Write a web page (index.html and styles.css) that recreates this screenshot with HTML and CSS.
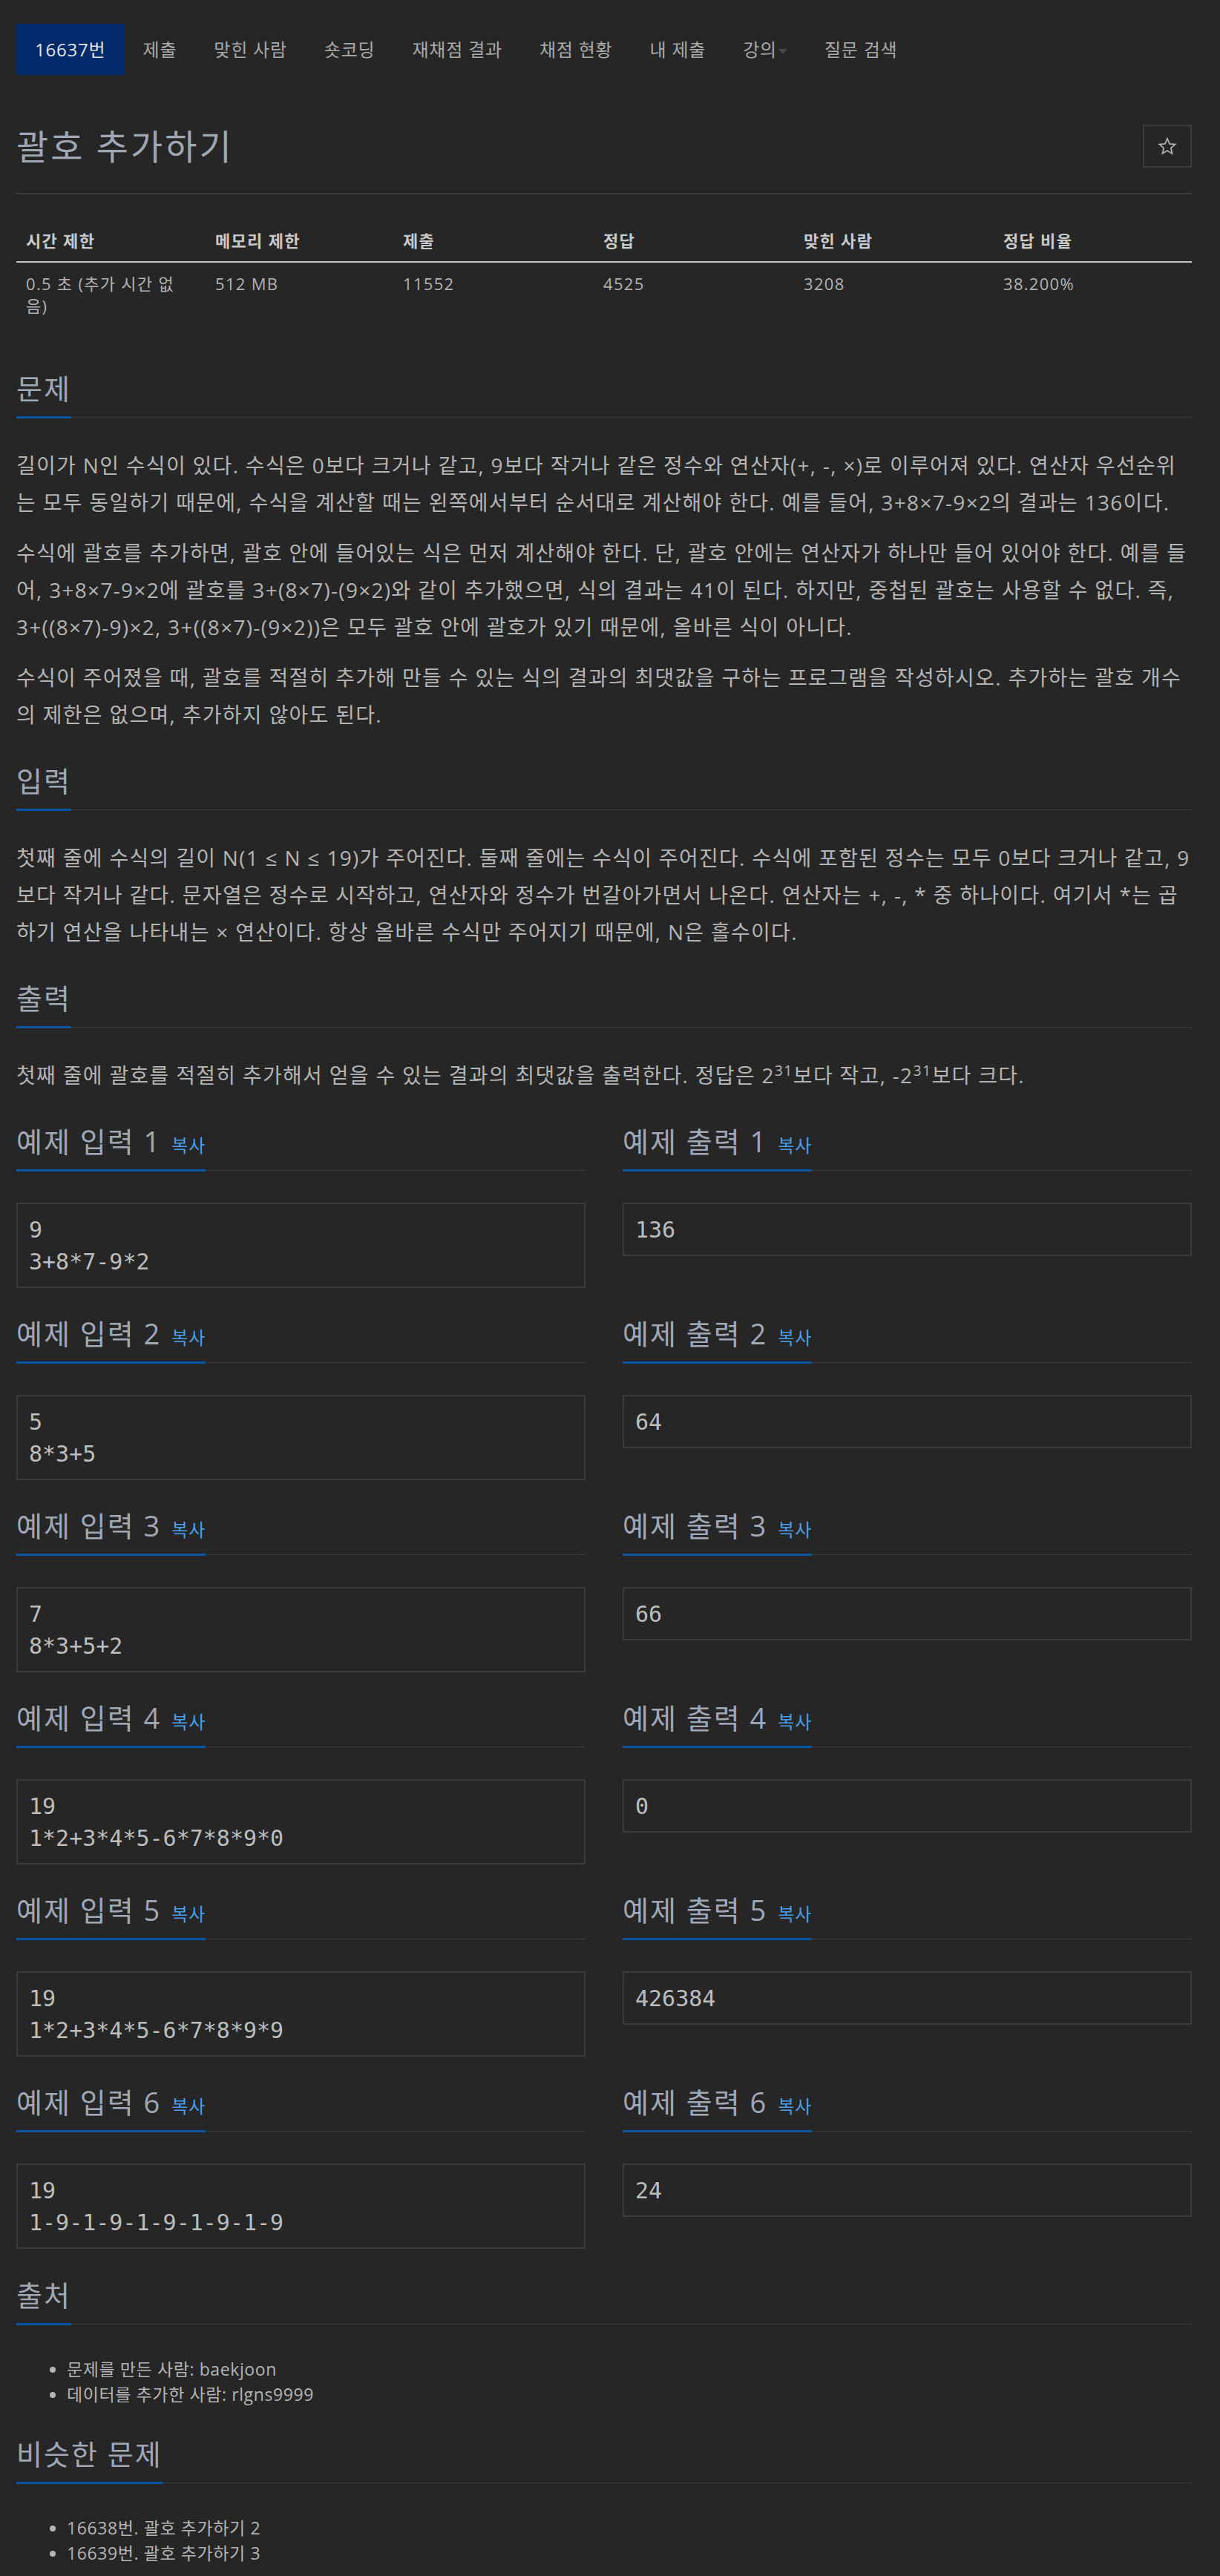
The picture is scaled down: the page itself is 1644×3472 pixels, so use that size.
FILE: index.html
```html
<!DOCTYPE html>
<html lang="ko">
  <head>
    <meta charset="UTF-8" />
    <meta name="viewport" content="width=device-width, initial-scale=1.0" />
    <title>괄호 추가하기</title>
    <link rel="stylesheet" href="styles.css">
  </head>
  <body>
    <div class="wrap">
      <ul class="tabs">
        <li class="active"><a href="#">16637번</a></li>
        <li><a href="#">제출</a></li>
        <li><a href="#">맞힌 사람</a></li>
        <li><a href="#">숏코딩</a></li>
        <li><a href="#">재채점 결과</a></li>
        <li><a href="#">채점 현황</a></li>
        <li><a href="#">내 제출</a></li>
        <li><a href="#">강의<span class="caret"></span></a></li>
        <li><a href="#">질문 검색</a></li>
      </ul>

      <div class="page-header">
        <h1>괄호 추가하기</h1>
        <button class="star" type="button">
          <svg width="26" height="26" viewBox="0 0 24 24">
            <path d="M12 2.6l2.8 6.5 7 .6-5.3 4.6 1.6 6.9L12 17.5l-6.1 3.7 1.6-6.9-5.3-4.6 7-.6z" fill="none" stroke="#b0b0b0" stroke-width="1.6" stroke-linejoin="miter" />
          </svg>
        </button>
      </div>

      <table class="info">
        <colgroup>
          <col style="width: 255px" />
          <col style="width: 253px" />
          <col style="width: 270px" />
          <col style="width: 270px" />
          <col style="width: 269px" />
          <col />
        </colgroup>
        <thead>
          <tr>
            <th>시간 제한</th>
            <th>메모리 제한</th>
            <th>제출</th>
            <th>정답</th>
            <th>맞힌 사람</th>
            <th>정답 비율</th>
          </tr>
        </thead>
        <tbody>
          <tr>
            <td class="limit">0.5 초 (추가 시간 없음)</td>
            <td>512 MB</td>
            <td>11552</td>
            <td>4525</td>
            <td>3208</td>
            <td>38.200%</td>
          </tr>
        </tbody>
      </table>

      <section class="section">
        <div class="headline"><h2>문제</h2></div>
        <div class="desc">
          <p>길이가 N인 수식이 있다. 수식은 0보다 크거나 같고, 9보다 작거나 같은 정수와 연산자(+, -, ×)로 이루어져 있다. 연산자 우선순위는 모두 동일하기 때문에, 수식을 계산할 때는 왼쪽에서부터 순서대로 계산해야 한다. 예를 들어, 3+8×7-9×2의 결과는 136이다.</p>
          <p>수식에 괄호를 추가하면, 괄호 안에 들어있는 식은 먼저 계산해야 한다. 단, 괄호 안에는 연산자가 하나만 들어 있어야 한다. 예를 들어, 3+8×7-9×2에 괄호를 3+(8×7)-(9×2)와 같이 추가했으면, 식의 결과는 41이 된다. 하지만, 중첩된 괄호는 사용할 수 없다. 즉, 3+((8×7)-9)×2, 3+((8×7)-(9×2))은 모두 괄호 안에 괄호가 있기 때문에, 올바른 식이 아니다.</p>
          <p>수식이 주어졌을 때, 괄호를 적절히 추가해 만들 수 있는 식의 결과의 최댓값을 구하는 프로그램을 작성하시오. 추가하는 괄호 개수의 제한은 없으며, 추가하지 않아도 된다.</p>
        </div>
      </section>

      <section class="section">
        <div class="headline"><h2>입력</h2></div>
        <div class="desc">
          <p>첫째 줄에 수식의 길이 N(1 ≤ N ≤ 19)가 주어진다. 둘째 줄에는 수식이 주어진다. 수식에 포함된 정수는 모두 0보다 크거나 같고, 9보다 작거나 같다. 문자열은 정수로 시작하고, 연산자와 정수가 번갈아가면서 나온다. 연산자는 +, -, * 중 하나이다. 여기서 *는 곱하기 연산을 나타내는 × 연산이다. 항상 올바른 수식만 주어지기 때문에, N은 홀수이다.</p>
        </div>
      </section>

      <section class="section">
        <div class="headline"><h2>출력</h2></div>
        <div class="desc">
          <p>첫째 줄에 괄호를 적절히 추가해서 얻을 수 있는 결과의 최댓값을 출력한다. 정답은 2<sup>31</sup>보다 작고, -2<sup>31</sup>보다 크다.</p>
        </div>
      </section>

      <div class="samples">
        <div class="sample">
          <div class="headline"><h2>예제 입력 1 <a class="copy" href="#">복사</a></h2></div>
          <pre>9
3+8*7-9*2</pre>
        </div>
        <div class="sample">
          <div class="headline"><h2>예제 출력 1 <a class="copy" href="#">복사</a></h2></div>
          <pre>136</pre>
        </div>
        <div class="sample">
          <div class="headline"><h2>예제 입력 2 <a class="copy" href="#">복사</a></h2></div>
          <pre>5
8*3+5</pre>
        </div>
        <div class="sample">
          <div class="headline"><h2>예제 출력 2 <a class="copy" href="#">복사</a></h2></div>
          <pre>64</pre>
        </div>
        <div class="sample">
          <div class="headline"><h2>예제 입력 3 <a class="copy" href="#">복사</a></h2></div>
          <pre>7
8*3+5+2</pre>
        </div>
        <div class="sample">
          <div class="headline"><h2>예제 출력 3 <a class="copy" href="#">복사</a></h2></div>
          <pre>66</pre>
        </div>
        <div class="sample">
          <div class="headline"><h2>예제 입력 4 <a class="copy" href="#">복사</a></h2></div>
          <pre>19
1*2+3*4*5-6*7*8*9*0</pre>
        </div>
        <div class="sample">
          <div class="headline"><h2>예제 출력 4 <a class="copy" href="#">복사</a></h2></div>
          <pre>0</pre>
        </div>
        <div class="sample">
          <div class="headline"><h2>예제 입력 5 <a class="copy" href="#">복사</a></h2></div>
          <pre>19
1*2+3*4*5-6*7*8*9*9</pre>
        </div>
        <div class="sample">
          <div class="headline"><h2>예제 출력 5 <a class="copy" href="#">복사</a></h2></div>
          <pre>426384</pre>
        </div>
        <div class="sample">
          <div class="headline"><h2>예제 입력 6 <a class="copy" href="#">복사</a></h2></div>
          <pre>19
1-9-1-9-1-9-1-9-1-9</pre>
        </div>
        <div class="sample">
          <div class="headline"><h2>예제 출력 6 <a class="copy" href="#">복사</a></h2></div>
          <pre>24</pre>
        </div>
      </div>

      <section class="section">
        <div class="headline"><h2>출처</h2></div>
        <ul class="list">
          <li>문제를 만든 사람: baekjoon</li>
          <li>데이터를 추가한 사람: rlgns9999</li>
        </ul>
      </section>

      <section class="section">
        <div class="headline"><h2>비슷한 문제</h2></div>
        <ul class="list">
          <li>16638번. 괄호 추가하기 2</li>
          <li>16639번. 괄호 추가하기 3</li>
        </ul>
      </section>
    </div>
  </body>
</html>
```

FILE: styles.css
```css
body {
  margin: 0;
  background-color: #262626;
  color: #b4b4b4;
  font-family: "Open Sans", "Noto Sans CJK KR", sans-serif;
}

/* flex 로 세로 배치해서 마진 겹침을 막는다 */
.wrap {
  display: flex;
  flex-direction: column;
  padding: 32px 38px 0 22px;
}

/* 상단 탭 */
.tabs {
  display: flex;
  list-style: none;
  margin: 0;
  padding: 0;
}

.tabs a {
  display: block;
  padding: 17px 25px;
  font-size: 24px;
  line-height: 35px;
  letter-spacing: 0.8px;
  color: #a9a9a9;
  text-decoration: none;
}

.tabs .active a {
  background-color: #002a6a;
  color: #e4e4e4;
}

.caret {
  display: inline-block;
  width: 0;
  height: 0;
  margin-left: 2px;
  vertical-align: middle;
  border-left: 6px solid transparent;
  border-right: 6px solid transparent;
  border-top: 7px solid #4a4a4a;
}

/* 제목 */
.page-header {
  display: flex;
  justify-content: space-between;
  align-items: center;
  margin-top: 67px;
  padding-bottom: 34px;
  border-bottom: 2px solid #3a3a3a;
}

.page-header h1 {
  margin: 0;
  font-size: 47px;
  line-height: 58px;
  letter-spacing: 3px;
  font-weight: normal;
  color: #a0a8b5;
}

.star {
  width: 66px;
  height: 58px;
  padding: 0;
  display: flex;
  align-items: center;
  justify-content: center;
  background: transparent;
  border: 2px solid #3c3c3c;
}

/* 제한 표 */
.info {
  width: 100%;
  table-layout: fixed;
  border-collapse: collapse;
  margin: 34px 0 37px;
  font-size: 22px;
  line-height: 30px;
  letter-spacing: 1.3px;
}

.info th,
.info td {
  padding: 13px;
  text-align: left;
  vertical-align: top;
}

.info th {
  font-weight: bold;
  color: #c9c9c9;
  border-bottom: 2px solid #c4c4c4;
}

.info td {
  color: #b2b2b2;
}

.info .limit {
  padding-right: 30px;
}

/* 섹션 */
.section {
  margin-top: 23px;
}

.headline {
  display: flex;
  border-bottom: 1px dotted #505050;
}

.headline h2 {
  margin: 0 0 -2px;
  padding-bottom: 15px;
  border-bottom: 3px solid #0a55a5;
  font-size: 38px;
  line-height: 46px;
  letter-spacing: 2px;
  font-weight: normal;
  color: #a0a8b5;
}

.desc {
  margin-top: 39px;
  font-size: 28px;
  line-height: 50px;
  letter-spacing: 1.3px;
}

.desc p {
  margin: 0 0 18px;
}

.desc sup {
  font-size: 70%;
  line-height: 0;
}

.copy {
  margin-left: 2px;
  font-size: 24px;
  line-height: 1;
  letter-spacing: 1px;
  color: #4a9fe8;
  text-decoration: none;
}

/* 예제 */
.samples {
  display: grid;
  grid-template-columns: 1fr 1fr;
  column-gap: 50px;
  row-gap: 38px;
  margin: 23px 0 16px;
}

.sample pre {
  margin: 43px 0 0;
  padding: 12.5px 15px;
  border: 2px solid #3a3a42;
  background-color: #262626;
  color: #bdbdbd;
  font-family: "DejaVu Sans Mono", monospace;
  font-size: 30px;
  line-height: 43px;
}

.list {
  margin: 43px 0 17px;
  padding-left: 68px;
  font-size: 23px;
  line-height: 34px;
  letter-spacing: 0.6px;
}
```
